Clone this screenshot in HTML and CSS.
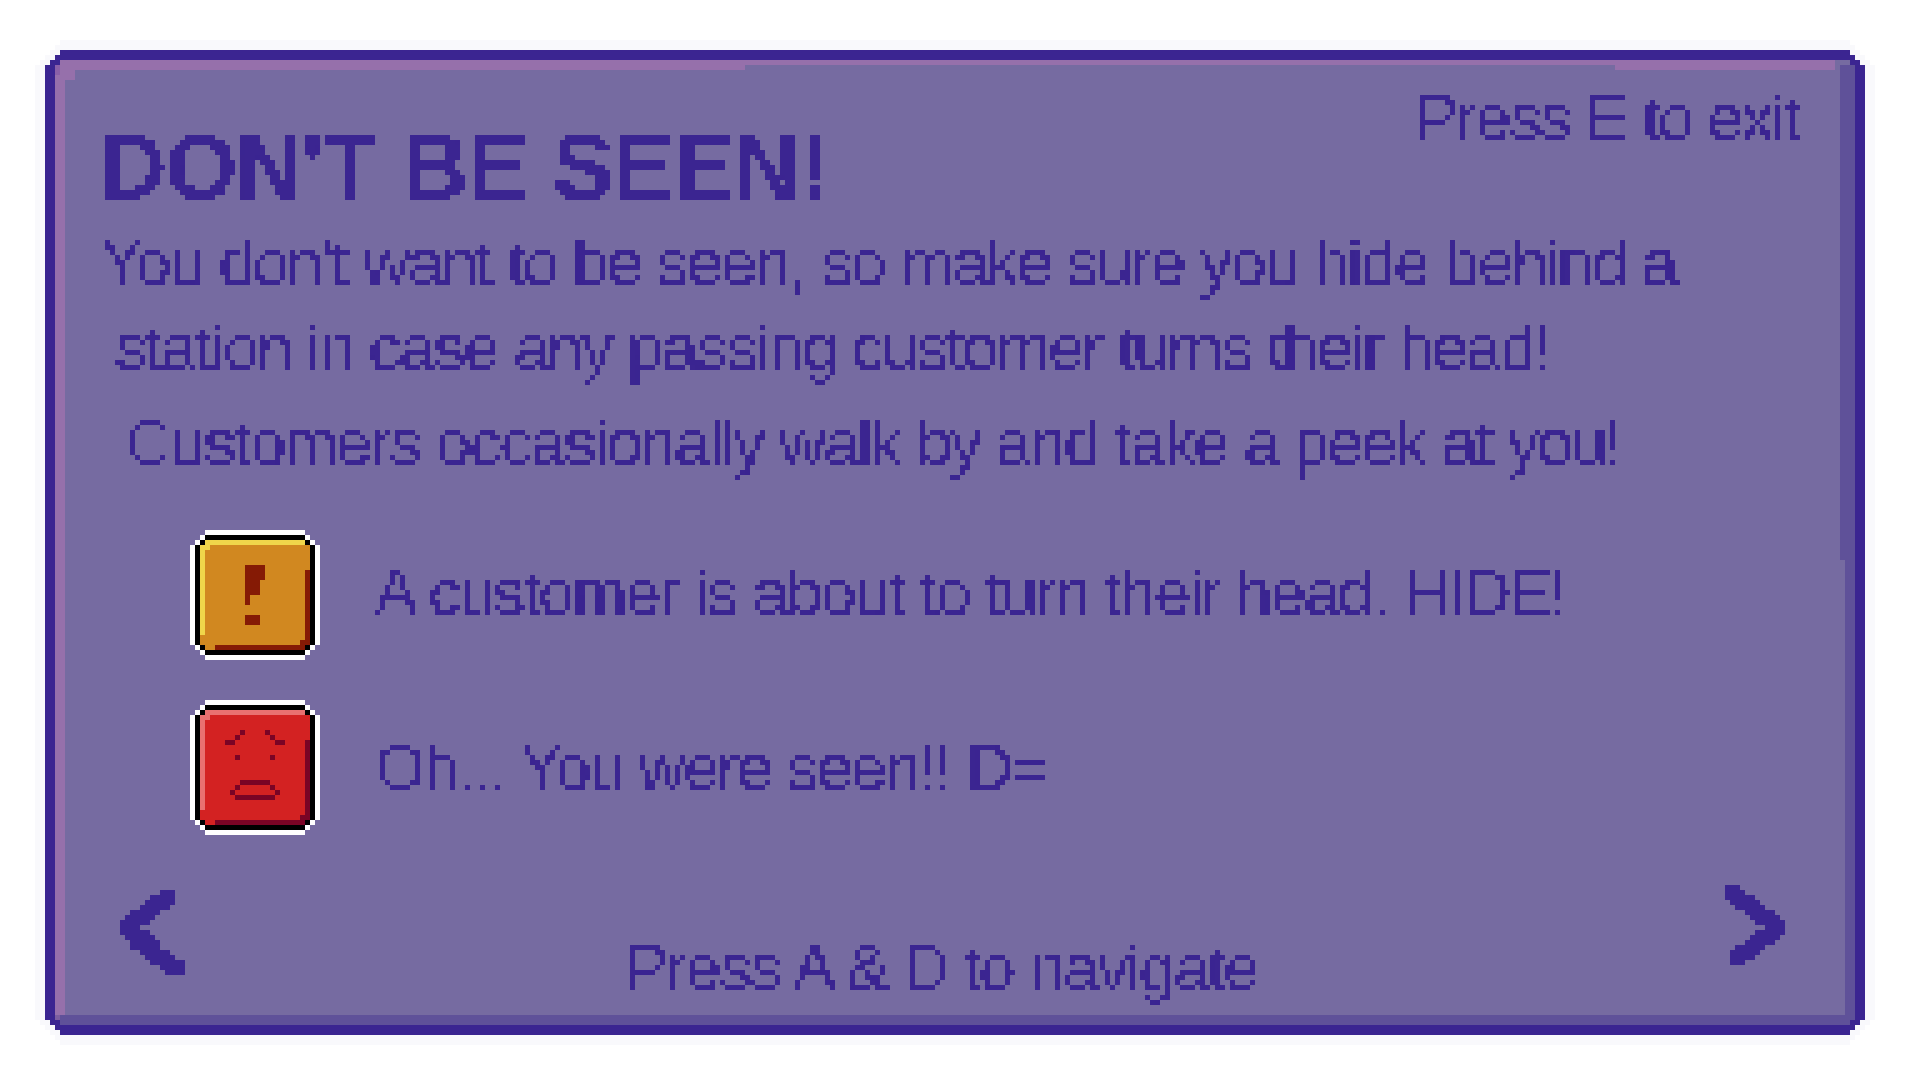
FILE: index.html
```html
<!DOCTYPE html>
<html>
<head>
    <meta charset="UTF-8">
    <title>Don't Be Seen</title>
    <link rel="stylesheet" href="styles.css">
</head>
<body>
<svg class="defs" width="0" height="0">
    <filter id="pixelate" x="0" y="0" width="100%" height="100%" color-interpolation-filters="sRGB">
        <feFlood x="2" y="2" width="1" height="1" flood-color="#000"/>
        <feComposite width="5" height="5"/>
        <feTile result="grid"/>
        <feComposite in="SourceGraphic" in2="grid" operator="in"/>
        <feMorphology operator="dilate" radius="2"/>
        <feComponentTransfer>
            <feFuncA type="discrete" tableValues="0 1"/>
        </feComponentTransfer>
    </filter>
</svg>

<div class="panel">
    <!-- frame is drawn in page coordinates -->
    <svg class="frame" viewBox="35 40 1840 1005" width="1840" height="1005" shape-rendering="crispEdges">
        <path fill="#f9f9fc" d="M60 40H1850V45H1855V50H1860V55H1865V60H1870V65H1875V1020H1870V1025H1865V1030H1860V1035H1855V1040H1850V1045H60V1040H55V1035H50V1030H45V1025H40V1020H35V65H40V60H45V55H50V50H55V45H60Z"/>
        <path fill="#3b2591" d="M60 50H1850V55H1855V60H1860V65H1865V1020H1860V1025H1855V1030H1850V1035H60V1030H55V1025H50V1020H45V65H50V60H55V55H60Z"/>
        <path fill="#766ba1" d="M65 65H1835V60H1850V65H1845V1015H65Z"/>
        <path fill="#9670ab" d="M60 60H1835V65H60Z M60 65H745V70H60Z M1615 65H1835V70H1615Z M60 70H75V80H60Z M55 75H65V1015H55Z"/>
        <path fill="#8a60a8" d="M55 65H60V75H55Z"/>
        <path fill="#5f5199" d="M1840 65H1855V1020H1850V1025H60V1015H1845V560H1840Z"/>
        <path fill="#7c5fa0" d="M55 1015H60V1020H55Z"/>
    </svg>

    <div class="header">
        <h1 class="title px">DON'T BE SEEN!</h1>
        <div class="exit line px">Press E to exit</div>
    </div>

    <div class="line line-one px">You don't want to be seen, so make sure you hide behind a</div>
    <div class="line line-two px">station in case any passing customer turns their head!</div>
    <div class="line line-three px">Customers occasionally walk by and take a peek at you!</div>

    <div class="row row-warn">
        <svg class="icon" viewBox="0 0 26 26" width="130" height="130" shape-rendering="crispEdges">
            <path fill="#fff" d="M3 0h20v1h1v1h1v1h1v20h-1v1h-1v1h-1v1H3v-1H2v-1H1v-1H0V3h1V2h1V1h1z"/>
            <path fill="#000" d="M3 1h20v1h1v1h1v20h-1v1h-1v1H3v-1H2v-1H1V3h1V2h1z"/>
            <path fill="#d18820" d="M3 2h20v1h1v20h-1v1H3v-1H2V3h1z"/>
            <path fill="#f0d64a" d="M3 2h20v1H4v1H3v17H2V3h1z"/>
            <path fill="#851a05" d="M23 8h1v15h-1v1H5v-1h17v-1h1z"/>
            <path fill="#851a05" d="M11 7h4v3h-1v3h-2v2h-1z M11 17h3v2h-3z"/>
        </svg>
        <div class="line row-text px">A customer is about to turn their head. HIDE!</div>
    </div>

    <div class="row row-seen">
        <svg class="icon" viewBox="0 0 26 27" width="130" height="135" shape-rendering="crispEdges">
            <path fill="#fff" d="M3 0h20v1h1v1h1v1h1v21h-1v1h-1v1h-1v1H3v-1H2v-1H1v-1H0V3h1V2h1V1h1z"/>
            <path fill="#000" d="M3 1h20v1h1v1h1v21h-1v1h-1v1H3v-1H2v-1H1V3h1V2h1z"/>
            <path fill="#d32222" d="M3 2h20v1h1v21h-1v1H3v-1H2V3h1z"/>
            <path fill="#e97070" d="M3 2h20v1H4v1H3v18H2V3h1z"/>
            <path fill="#7a0425" d="M23 8h1v16h-1v1H5v-1h17v-1h1z"/>
            <path fill="#7a0425" d="M10 6h1v1h-1z M9 7h1v1H9z M7 8h2v1H7z M15 6h1v1h-1z M16 7h1v1h-1z M17 8h2v1h-2z M9 11h1v1H9z M16 11h1v1h-1z M10 16h6v1h-6z M9 17h1v1H9z M16 17h1v1h-1z M8 18h1v1H8z M17 18h1v1h-1z M9 19h8v1H9z"/>
        </svg>
        <div class="line row-text px">Oh... You were seen!! D=</div>
    </div>

    <div class="footer">
        <svg class="arrow arrow-left" viewBox="0 0 13 17" width="65" height="85" shape-rendering="crispEdges">
            <path fill="#3b2591" d="M8 0h3v1H8z M6 1h5v1H6z M5 2h6v1H5z M4 3h6v1H4z M2 4h6v1H2z M1 5h6v1H1z M0 6h6v1H0z M0 7h4v1H0z M0 8h6v1H0z M1 9h6v1H1z M2 10h6v1H2z M2 11h6v1H2z M4 12h6v1H4z M5 13h6v1H5z M6 14h7v1H6z M8 15h5v1H8z M9 16h4v1H9z"/>
        </svg>
        <div class="line nav-text px">Press A &amp; D to navigate</div>
        <svg class="arrow" viewBox="0 0 12 16" width="60" height="80" shape-rendering="crispEdges">
            <path fill="#3b2591" d="M0 0h3v1H0z M0 1h4v1H0z M0 2h6v1H0z M1 3h6v1H1z M2 4h6v1H2z M4 5h6v1H4z M5 6h6v1H5z M6 7h6v1H6z M8 8h4v1H8z M6 9h6v1H6z M5 10h6v1H5z M4 11h6v1H4z M2 12h6v1H2z M1 13h6v1H1z M1 14h5v1H1z M1 15h3v1H1z"/>
        </svg>
    </div>
</div>
</body>
</html>
```

FILE: styles.css
```css
body {
    margin: 0;
    background-color: #ffffff;
    font-family: "Liberation Sans", Arial, sans-serif;
    color: #3b2591;
}

.defs {
    position: absolute;
}

.panel {
    position: relative;
    box-sizing: border-box;
    width: 1840px;
    height: 1005px;
    margin: 40px 0 0 35px;
    padding: 35px 0 0 65px;
}

.frame {
    position: absolute;
    top: 0;
    left: 0;
    z-index: -1;
}

/* text gets sampled on a 5px grid, so boxes must start on multiples of 5 */
.px {
    filter: url(#pixelate);
}

.header {
    display: flex;
    align-items: flex-start;
}

.title {
    flex: 0 0 1315px;
    height: 105px;
    margin: 40px 0 0 0;
    font-size: 92px;
    font-weight: bold;
    line-height: 105px;
    letter-spacing: -1px;
}

.line {
    height: 85px;
    font-size: 65px;
    line-height: 85px;
    letter-spacing: -2.2px;
    white-space: nowrap;
}

.exit {
    width: 420px;
    letter-spacing: -2.3px;
}

.line-one {
    margin-left: 0;
}

.line-two {
    margin-left: 15px;
}

.line-three {
    margin: 10px 0 0 25px;
}

.row {
    display: flex;
    align-items: flex-start;
    margin-left: 90px;
}

.row-warn {
    margin-top: 45px;
    height: 130px;
}

.row-seen {
    margin-top: 40px;
    height: 135px;
}

.row-warn .row-text {
    margin: 20px 0 0 55px;
}

.row-seen .row-text {
    margin: 25px 0 0 55px;
}

.footer {
    display: flex;
    align-items: flex-start;
    margin: 50px 0 0 20px;
}

.arrow-left {
    margin-top: 5px;
}

.nav-text {
    width: 1100px;
    margin: 40px 0 0 440px;
}
```
